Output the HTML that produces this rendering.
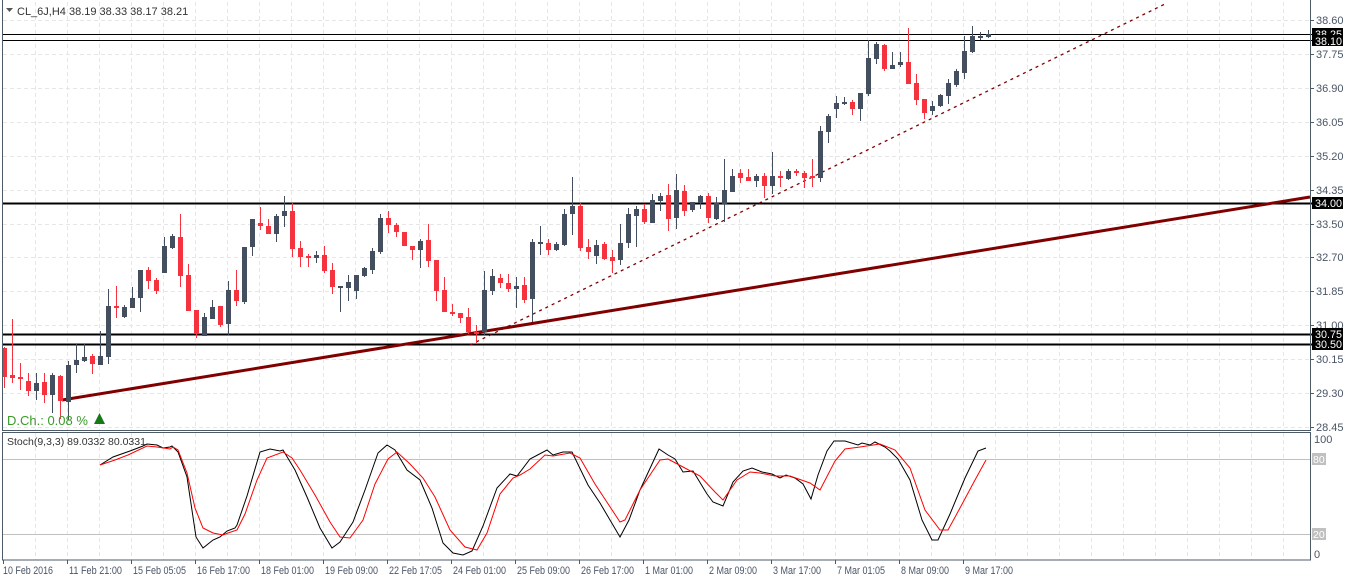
<!DOCTYPE html>
<html><head><meta charset="utf-8"><style>
html,body{margin:0;padding:0;background:#fff;width:1350px;height:581px;overflow:hidden}
svg{display:block}
text{font-family:"Liberation Sans",sans-serif}
</style></head><body>
<svg width="1350" height="581" viewBox="0 0 1350 581" xmlns="http://www.w3.org/2000/svg">
<rect width="1350" height="581" fill="#fff"/>
<g stroke="#e6e6e6" stroke-width="1" stroke-dasharray="4,3">
<path d="M35.5 2V430M67.5 2V430M99.5 2V430M131.5 2V430M163.5 2V430M195.5 2V430M227.5 2V430M259.5 2V430M291.5 2V430M323.5 2V430M355.5 2V430M387.5 2V430M419.5 2V430M451.5 2V430M483.5 2V430M515.5 2V430M547.5 2V430M579.5 2V430M611.5 2V430M643.5 2V430M675.5 2V430M707.5 2V430M739.5 2V430M771.5 2V430M803.5 2V430M835.5 2V430M867.5 2V430M899.5 2V430M931.5 2V430M963.5 2V430M995.5 2V430M1027.5 2V430M1059.5 2V430M1091.5 2V430M1123.5 2V430M1155.5 2V430M1187.5 2V430M1219.5 2V430M1251.5 2V430M1283.5 2V430"/>
<path d="M3 20.5H1310M3 54.5H1310M3 88.5H1310M3 122.5H1310M3 156.5H1310M3 190.5H1310M3 224.5H1310M3 257.5H1310M3 291.5H1310M3 325.5H1310M3 359.5H1310M3 393.5H1310M3 427.5H1310"/>
<path d="M35.5 433V560M67.5 433V560M99.5 433V560M131.5 433V560M163.5 433V560M195.5 433V560M227.5 433V560M259.5 433V560M291.5 433V560M323.5 433V560M355.5 433V560M387.5 433V560M419.5 433V560M451.5 433V560M483.5 433V560M515.5 433V560M547.5 433V560M579.5 433V560M611.5 433V560M643.5 433V560M675.5 433V560M707.5 433V560M739.5 433V560M771.5 433V560M803.5 433V560M835.5 433V560M867.5 433V560M899.5 433V560M931.5 433V560M963.5 433V560M995.5 433V560M1027.5 433V560M1059.5 433V560M1091.5 433V560M1123.5 433V560M1155.5 433V560M1187.5 433V560M1219.5 433V560M1251.5 433V560M1283.5 433V560"/>
</g>
<path d="M3 34.5H1312M3 40.5H1312" stroke="#000" stroke-width="1"/>
<path d="M3 203.5H1312M3 334.5H1312M3 344.5H1312" stroke="#000" stroke-width="2"/>
<path d="M62 400L1310 197" stroke="#800000" stroke-width="3"/>
<path d="M470 345L1167 3" stroke="#800000" stroke-width="1.3" stroke-dasharray="3,4"/>
<path stroke="#434f5e" stroke-width="1" fill="none" d="M36.5 373V400M52.5 373V413M68.5 361V420M76.5 344V373M84.5 344V362M100.5 331V365M108.5 289V364M124.5 305V318M132.5 287V308M140.5 270V312M164.5 237V273M172.5 234V249M204.5 313V336M212.5 300V319M228.5 281V335M244.5 247V304M252.5 219V256M276.5 214V242M284.5 196V227M316.5 251V263M340.5 286V312M348.5 275V301M356.5 275V299M364.5 267V277M372.5 248V274M380.5 214V254M420.5 239V268M484.5 271V335M492.5 269V295M516.5 277V308M532.5 239V322M540.5 226V255M556.5 242V251M564.5 209V246M572.5 177V235M596.5 240V264M620.5 224V265M628.5 208V248M636.5 206V247M652.5 194V223M660.5 193V211M676.5 174V229M692.5 202V212M700.5 195V209M716.5 197V220M724.5 159V222M732.5 169V192M756.5 174V187M772.5 152V194M788.5 169V180M820.5 126V182M828.5 114V143M836.5 96V118M844.5 97V105M860.5 93V121M868.5 40V96M876.5 42V64M892.5 52V69M900.5 52V67M932.5 101V115M940.5 94V107M948.5 79V104M956.5 69V87M964.5 36V79M972.5 26V53M980.5 32V40M988.5 30V38"/>
<path fill="#434f5e" d="M34 383h5v8h-5zM50 375h5v20h-5zM66 365h5v37h-5zM74 360h5v5h-5zM82 357h5v4h-5zM98 356h5v9h-5zM106 306h5v51h-5zM122 307h5v10h-5zM130 298h5v10h-5zM138 270h5v28h-5zM162 246h5v27h-5zM170 236h5v12h-5zM202 317h5v19h-5zM210 307h5v12h-5zM226 290h5v34h-5zM242 247h5v55h-5zM250 219h5v28h-5zM274 216h5v18h-5zM282 211h5v5h-5zM314 255h5v3h-5zM338 286h5v2h-5zM346 282h5v6h-5zM354 275h5v16h-5zM362 268h5v8h-5zM370 251h5v19h-5zM378 218h5v34h-5zM418 241h5v9h-5zM482 290h5v42h-5zM490 276h5v15h-5zM514 286h5v3h-5zM530 242h5v57h-5zM538 242h5v2h-5zM554 244h5v6h-5zM562 214h5v31h-5zM570 206h5v8h-5zM594 245h5v11h-5zM618 243h5v17h-5zM626 214h5v29h-5zM634 209h5v7h-5zM650 200h5v23h-5zM658 196h5v5h-5zM674 190h5v28h-5zM690 202h5v8h-5zM698 196h5v7h-5zM714 203h5v16h-5zM722 190h5v14h-5zM730 176h5v16h-5zM754 176h5v5h-5zM770 176h5v10h-5zM786 171h5v8h-5zM818 131h5v47h-5zM826 116h5v16h-5zM834 103h5v6h-5zM842 102h5v2h-5zM858 93h5v16h-5zM866 58h5v36h-5zM874 44h5v15h-5zM890 65h5v4h-5zM898 62h5v3h-5zM930 106h5v5h-5zM938 95h5v11h-5zM946 83h5v13h-5zM954 71h5v14h-5zM962 51h5v22h-5zM970 36h5v16h-5zM978 36h5v2h-5zM986 34h5v3h-5z"/>
<path stroke="#f5333f" stroke-width="1" fill="none" d="M4.5 347V388M12.5 319V383M20.5 363V390M28.5 373V396M44.5 373V403M60.5 375V419M92.5 354V374M116.5 286V318M148.5 267V289M156.5 278V294M180.5 214V287M188.5 264V311M196.5 310V338M220.5 306V327M236.5 270V306M260.5 207V230M268.5 219V234M292.5 203V257M300.5 241V267M308.5 254V267M324.5 246V273M332.5 263V294M388.5 211V233M396.5 223V237M404.5 232V246M412.5 246V260M428.5 224V267M436.5 260V301M444.5 277V312M452.5 304V316M460.5 313V323M468.5 308V334M476.5 325V343M500.5 274V288M508.5 274V292M524.5 277V303M548.5 239V255M580.5 203V251M588.5 239V259M604.5 242V260M612.5 250V273M644.5 204V224M668.5 184V231M684.5 185V216M708.5 193V223M740.5 169V183M748.5 169V181M764.5 173V198M780.5 171V187M796.5 169V176M804.5 171V188M812.5 159V187M852.5 100V115M884.5 44V71M908.5 28V84M916.5 74V105M924.5 99V119"/>
<path fill="#f5333f" d="M3 348h4v29h-4zM10 375h5v3h-5zM18 377h5v2h-5zM26 381h5v10h-5zM42 382h5v13h-5zM58 376h5v25h-5zM90 356h5v8h-5zM114 306h5v2h-5zM146 270h5v11h-5zM154 280h5v11h-5zM178 237h5v39h-5zM186 275h5v36h-5zM194 310h5v24h-5zM218 306h5v19h-5zM234 290h5v11h-5zM258 223h5v3h-5zM266 226h5v8h-5zM290 211h5v38h-5zM298 248h5v9h-5zM306 256h5v2h-5zM322 255h5v16h-5zM330 270h5v17h-5zM386 218h5v7h-5zM394 225h5v7h-5zM402 232h5v14h-5zM410 246h5v4h-5zM426 240h5v21h-5zM434 260h5v31h-5zM442 290h5v22h-5zM450 312h5v2h-5zM458 313h5v5h-5zM466 317h5v15h-5zM474 332h5v2h-5zM498 278h5v5h-5zM506 283h5v6h-5zM522 285h5v15h-5zM546 243h5v7h-5zM578 206h5v42h-5zM586 247h5v5h-5zM602 244h5v15h-5zM610 257h5v4h-5zM642 209h5v13h-5zM666 195h5v24h-5zM682 191h5v20h-5zM706 196h5v22h-5zM738 173h5v5h-5zM746 177h5v4h-5zM762 176h5v10h-5zM778 176h5v2h-5zM794 171h5v2h-5zM802 173h5v5h-5zM810 176h5v2h-5zM850 102h5v7h-5zM882 45h5v24h-5zM906 62h5v22h-5zM914 83h5v17h-5zM922 99h5v14h-5z"/>
<path d="M2.5 0V430.5H1310.5V0" fill="none" stroke="#4d5b69" stroke-width="1"/>
<rect x="2.5" y="432.5" width="1308" height="127.5" fill="none" stroke="#4d5b69" stroke-width="1"/>
<path d="M6 8h7l-3.5 4z" fill="#555"/>
<text x="17" y="15" font-size="11" fill="#333">CL_6J,H4  38.19 38.33 38.17 38.21</text>
<text x="7" y="425" font-size="13" fill="#3a9a2a">D.Ch.: 0.08 %</text>
<path d="M94 424L99.5 413L105 424z" fill="#157a15"/>
<g font-size="11" fill="#4a5566">
<path d="M1310 20.5h4M1310 54.5h4M1310 88.5h4M1310 122.5h4M1310 156.5h4M1310 190.5h4M1310 224.5h4M1310 257.5h4M1310 291.5h4M1310 325.5h4M1310 359.5h4M1310 393.5h4M1310 427.5h4" stroke="#4d5b69"/>
<text x="1316" y="24">38.60</text>
<text x="1316" y="58">37.75</text>
<text x="1316" y="92">36.90</text>
<text x="1316" y="126">36.05</text>
<text x="1316" y="160">35.20</text>
<text x="1316" y="194">34.35</text>
<text x="1316" y="228">33.50</text>
<text x="1316" y="261">32.70</text>
<text x="1316" y="295">31.85</text>
<text x="1316" y="329">31.00</text>
<text x="1316" y="363">30.15</text>
<text x="1316" y="397">29.30</text>
<text x="1316" y="431">28.45</text>
</g>
<g font-size="11" fill="#fff">
<rect x="1312" y="28" width="31" height="11" fill="#000"/><text x="1315" y="38" textLength="27" lengthAdjust="spacingAndGlyphs">38.25</text>
<rect x="1312" y="35" width="31" height="11" fill="#000"/><text x="1315" y="45" textLength="27" lengthAdjust="spacingAndGlyphs">38.10</text>
<rect x="1312" y="197" width="31" height="12" fill="#000"/><text x="1315" y="207" textLength="27" lengthAdjust="spacingAndGlyphs">34.00</text>
<rect x="1312" y="328" width="31" height="12" fill="#000"/><text x="1315" y="338" textLength="27" lengthAdjust="spacingAndGlyphs">30.75</text>
<rect x="1312" y="339" width="31" height="11" fill="#000"/><text x="1315" y="348" textLength="27" lengthAdjust="spacingAndGlyphs">30.50</text>
</g>
<path d="M3 459.5H1310M3 534.5H1310" stroke="#c0c0c0" stroke-width="1"/>
<text x="7" y="445" font-size="10.5" fill="#333">Stoch(9,3,3) 89.0332 80.0331</text>
<g font-size="11" fill="#4a5566">
<text x="1314" y="443">100</text>
<text x="1314" y="558">0</text>
</g>
<rect x="1312" y="453" width="14" height="12" fill="#c0c0c0"/><text x="1313" y="463" font-size="10.5" fill="#fff">80</text>
<rect x="1312" y="528" width="14" height="12" fill="#c0c0c0"/><text x="1313" y="538" font-size="10.5" fill="#fff">20</text>
<polyline fill="none" stroke="#000" stroke-width="1" points="100,465 113,457 130,451 143,446 147,444 157,445 163,448 170,447 172,446 178,452 187,477 196,537 203,548 213,540 220,537 227,531 235,528 237,525 247,496 260,452 270,449 280,451 283,450 295,470 307,497 320,528 332,548 340,542 353,522 365,490 378,453 387,445 395,450 407,470 420,480 432,508 443,543 453,553 463,555 472,551 483,526 497,488 510,474 517,476 530,459 547,450 553,455 563,452 572,452 588,485 600,503 620,537 629,520 640,490 659,449 668,455 675,459 683,472 693,471 707,494 713,502 723,506 733,482 743,471 752,468 762,472 772,474 780,478 786,475 795,478 803,484 811,499 818,475 827,451 834,441 845,441 858,445 862,443 870,445 875,442 885,447 890,451 898,459 910,480 922,520 932,540 938,540 950,514 965,478 978,451 986,448"/>
<polyline fill="none" stroke="#ff0000" stroke-width="1" points="100,465 115,460 128,455 147,446 157,447 170,449 173,447 178,450 187,473 195,508 203,528 213,533 223,535 228,533 237,530 245,514 257,480 267,458 283,452 292,458 300,470 315,495 330,522 340,537 350,538 363,520 375,484 388,459 397,452 410,464 423,478 435,497 450,530 465,547 477,550 487,533 500,494 513,478 520,475 530,469 545,455 553,456 570,453 580,458 595,484 620,522 625,520 640,490 660,460 668,459 683,467 700,476 715,492 723,500 737,480 750,472 760,473 775,476 790,476 810,483 820,490 835,461 845,449 860,447 880,444 895,450 910,468 925,510 940,530 948,530 960,508 975,480 986,460"/>
<path d="M3.5 560v4M67.5 560v4M131.5 560v4M195.5 560v4M259.5 560v4M323.5 560v4M387.5 560v4M451.5 560v4M515.5 560v4M579.5 560v4M643.5 560v4M707.5 560v4M771.5 560v4M835.5 560v4M899.5 560v4M963.5 560v4" stroke="#4d5b69"/>
<g font-size="11" fill="#4a5566" lengthAdjust="spacingAndGlyphs">
<text x="3" y="574" textLength="50" lengthAdjust="spacingAndGlyphs">10 Feb 2016</text>
<text x="69" y="574" textLength="53" lengthAdjust="spacingAndGlyphs">11 Feb 21:00</text>
<text x="133" y="574" textLength="53" lengthAdjust="spacingAndGlyphs">15 Feb 05:05</text>
<text x="197" y="574" textLength="53" lengthAdjust="spacingAndGlyphs">16 Feb 17:00</text>
<text x="261" y="574" textLength="53" lengthAdjust="spacingAndGlyphs">18 Feb 01:00</text>
<text x="325" y="574" textLength="53" lengthAdjust="spacingAndGlyphs">19 Feb 09:00</text>
<text x="389" y="574" textLength="53" lengthAdjust="spacingAndGlyphs">22 Feb 17:05</text>
<text x="453" y="574" textLength="53" lengthAdjust="spacingAndGlyphs">24 Feb 01:00</text>
<text x="517" y="574" textLength="53" lengthAdjust="spacingAndGlyphs">25 Feb 09:00</text>
<text x="581" y="574" textLength="53" lengthAdjust="spacingAndGlyphs">26 Feb 17:00</text>
<text x="645" y="574" textLength="48" lengthAdjust="spacingAndGlyphs">1 Mar 01:00</text>
<text x="709" y="574" textLength="48" lengthAdjust="spacingAndGlyphs">2 Mar 09:00</text>
<text x="773" y="574" textLength="48" lengthAdjust="spacingAndGlyphs">3 Mar 17:00</text>
<text x="837" y="574" textLength="48" lengthAdjust="spacingAndGlyphs">7 Mar 01:05</text>
<text x="901" y="574" textLength="48" lengthAdjust="spacingAndGlyphs">8 Mar 09:00</text>
<text x="965" y="574" textLength="48" lengthAdjust="spacingAndGlyphs">9 Mar 17:00</text>
</g>
</svg>
</body></html>
